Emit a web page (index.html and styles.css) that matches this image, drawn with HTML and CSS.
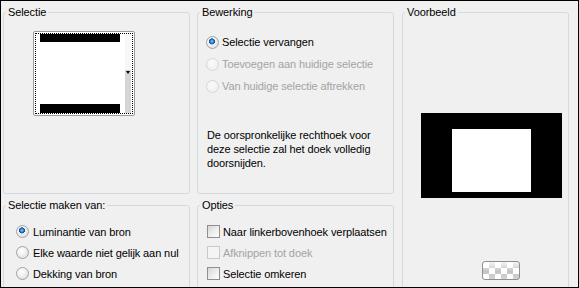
FILE: index.html
```html
<!DOCTYPE html>
<html lang="nl">
<head>
  <meta charset="UTF-8" />
  <title>Selectie maken</title>
  <link rel="stylesheet" href="styles.css">
</head>
<body>
  <div class="dialog">
    <fieldset class="group">
      <legend>Selectie</legend>
      <div class="swatch">
        <div class="swatch-inner">
          <div class="swatch-img">
            <span class="bar bar-top"></span>
            <span class="bar bar-bottom"></span>
          </div>
          <div class="swatch-scroll"><span class="arrow"></span></div>
        </div>
      </div>
    </fieldset>

    <fieldset class="group">
      <legend>Bewerking</legend>
      <div class="options edit-options">
        <label class="opt"><input type="radio" name="mode" checked> Selectie vervangen</label>
        <label class="opt disabled"><input type="radio" name="mode" disabled> Toevoegen aan huidige selectie</label>
        <label class="opt disabled"><input type="radio" name="mode" disabled> Van huidige selectie aftrekken</label>
      </div>
      <p class="note">De oorspronkelijke rechthoek voor<br>deze selectie zal het doek volledig<br>doorsnijden.</p>
    </fieldset>

    <fieldset class="group preview-group">
      <legend>Voorbeeld</legend>
      <div class="preview"><span class="preview-sel"></span></div>
      <button class="bg-btn" type="button"></button>
    </fieldset>

    <fieldset class="group">
      <legend>Selectie maken van:</legend>
      <div class="options source-options">
        <label class="opt"><input type="radio" name="src" checked> Luminantie van bron</label>
        <label class="opt"><input type="radio" name="src"> Elke waarde niet gelijk aan nul</label>
        <label class="opt"><input type="radio" name="src"> Dekking van bron</label>
      </div>
    </fieldset>

    <fieldset class="group">
      <legend>Opties</legend>
      <div class="options check-options">
        <label class="opt"><input type="checkbox"> Naar linkerbovenhoek verplaatsen</label>
        <label class="opt disabled"><input type="checkbox" disabled> Afknippen tot doek</label>
        <label class="opt"><input type="checkbox"> Selectie omkeren</label>
      </div>
    </fieldset>
  </div>
</body>
</html>
```

FILE: styles.css
```css
body {
  margin: 0;
  font-family: "Liberation Sans", Arial, sans-serif;
  font-size: 11px;
  letter-spacing: -0.1px;
  color: #000;
}

.dialog {
  width: 579px;
  height: 288px;
  box-sizing: border-box;
  border: 1px solid #000;
  background: #f0f0f0;
  overflow: hidden;
  display: grid;
  grid-template-columns: 187px 197px 168px;
  grid-template-rows: 188px 100px;
  column-gap: 7px;
  row-gap: 5px;
  padding: 5px 0 0 2px;
}

.group {
  margin: 0;
  padding: 0;
  min-width: 0;
  border: 1px solid #d3dbe0;
  border-radius: 3px;
}

.group legend {
  margin-left: 2px;
  padding: 0 2px;
  line-height: 13px;
}

/* selectie swatch */
.swatch {
  width: 102px;
  height: 85px;
  margin: 12px 0 0 29px;
  box-sizing: border-box;
  border: 1px solid #9b9b9b;
  border-radius: 2px;
  padding: 1px;
  background: #fff;
}

.swatch-inner {
  height: 100%;
  box-sizing: border-box;
  border: 1px dotted #000;
  display: flex;
}

.swatch-img {
  width: 80px;
  margin-left: 4px;
  display: flex;
  flex-direction: column;
  justify-content: space-between;
}

.bar {
  display: block;
  background: #000;
}

.bar-top {
  height: 8px;
}

.bar-bottom {
  height: 9px;
}

.swatch-scroll {
  width: 6px;
  margin-left: 5px;
  background: linear-gradient(#f7f7f7 0 36px, #d5d5d5 36px);
}

.arrow {
  display: block;
  width: 0;
  height: 0;
  margin: 37px auto 0;
  border-left: 2px solid transparent;
  border-right: 2px solid transparent;
  border-top: 3px solid #000;
}

/* radio and check rows */
.opt {
  display: flex;
  align-items: center;
  white-space: nowrap;
}

.opt.disabled {
  color: #a3a3a3;
}

.edit-options {
  margin: 12px 0 0 8px;
}

.edit-options .opt {
  height: 22px;
}

.source-options {
  margin: 9px 0 0 12px;
}

.source-options .opt,
.check-options .opt {
  height: 21px;
}

.check-options {
  margin: 9px 0 0 9px;
}

.opt input {
  appearance: none;
  -webkit-appearance: none;
  width: 13px;
  height: 13px;
  margin: 0 4px 0 0;
  box-sizing: border-box;
  flex: none;
}

.edit-options .opt input,
.check-options .opt input {
  margin-right: 3px;
}

input[type="radio"] {
  border-radius: 50%;
  border: 1px solid #a2a2a2;
  background: radial-gradient(circle at 40% 35%, #ffffff 0, #f2f2f2 40%, #d6d6d6 100%);
}

input[type="radio"]:checked {
  background:
    radial-gradient(circle at 45% 40%, #9fd3ff 0, #2c86d8 1.5px, #0f4f95 2.8px, transparent 3.3px),
    radial-gradient(circle at 40% 35%, #ffffff 0, #f2f2f2 40%, #d6d6d6 100%);
}

input[type="radio"]:disabled {
  border-color: #d6d6d6;
  background: radial-gradient(circle at 40% 35%, #fbfbfb 0, #ececec 100%);
}

input[type="checkbox"] {
  border: 1px solid #8f8f8f;
  background: linear-gradient(135deg, #d6d6d6 0, #efefef 55%, #fdfdfd 100%);
}

input[type="checkbox"]:disabled {
  border-color: #c9c9c9;
  background: #f4f4f4;
}

.note {
  margin: 31px 0 0 9px;
  line-height: 14px;
}

/* voorbeeld */
.preview {
  display: block;
  width: 141px;
  height: 85px;
  margin: 94px 0 0 18px;
  box-sizing: border-box;
  padding: 16px 31px 6px;
  background: #000;
}

.preview-sel {
  display: block;
  width: 79px;
  height: 63px;
  background: #fff;
}

.bg-btn {
  display: block;
  width: 38px;
  height: 19px;
  margin: 63px 0 0 79px;
  padding: 0;
  border: 1px solid #8e8e8e;
  border-radius: 3px;
  background:
    linear-gradient(rgba(255, 255, 255, 0.85), rgba(255, 255, 255, 0) 55%, rgba(255, 255, 255, 0.25)),
    repeating-conic-gradient(#c4c4c4 0 25%, #ffffff 0 50%) 0 0 / 12px 12px;
}

.preview-group {
  grid-column: 3;
  grid-row: 1 / span 2;
  margin-left: 1px;
}
```
